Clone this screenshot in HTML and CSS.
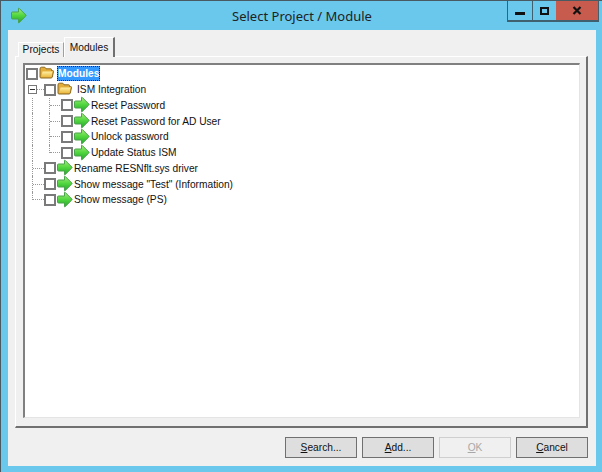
FILE: index.html
```html
<!DOCTYPE html>
<html lang="en">
<head>
<meta charset="utf-8">
<title>Select Project / Module</title>
<link rel="stylesheet" href="styles.css">
</head>
<body>
<svg class="defs" width="0" height="0" aria-hidden="true">
  <defs>
    <linearGradient id="arrow-fill" x1="0" y1="0" x2="0" y2="1">
      <stop offset="0" stop-color="#a5ee7c"/>
      <stop offset="0.5" stop-color="#52d63f"/>
      <stop offset="1" stop-color="#1fa52c"/>
    </linearGradient>
    <linearGradient id="folder-fill" x1="0" y1="0" x2="0" y2="1">
      <stop offset="0" stop-color="#fff0a8"/>
      <stop offset="1" stop-color="#ecb93f"/>
    </linearGradient>
  </defs>
  <symbol id="arrow" viewBox="0 0 17 17">
    <path d="M2.5 5H8.5V1.5Q8.5 .8 9.2 1.4L15.8 8Q16.3 8.5 15.8 9L9.2 15.6Q8.5 16.2 8.5 15.5V12H2.5Q1.5 12 1.5 11V6Q1.5 5 2.5 5Z" fill="url(#arrow-fill)" stroke="#4aa24a" stroke-width="1" stroke-linejoin="round"/>
  </symbol>
  <symbol id="folder" viewBox="0 0 15 13">
    <path d="M1 3V11Q1 12 2 12H12Q13 12 13.3 11L14.5 5.5Q14.6 4.5 13.5 4.5H12.5V3.5Q12.5 2.8 11.8 2.8H7L5.8 1.2H2.5Q1 1.2 1 3Z" fill="#e3ad3a" stroke="#8c6a22" stroke-width="1" stroke-linejoin="round"/>
    <path d="M3.5 5.5H13.5L12.4 11H2.2Z" fill="url(#folder-fill)"/>
  </symbol>
</svg>
<div class="window">
  <header class="titlebar">
    <svg class="app-icon"><use href="#arrow"/></svg>
    <div class="title">Select Project / Module</div>
    <div class="controls">
      <div class="ctl ctl-min"><span class="min-glyph"></span></div>
      <div class="ctl ctl-max"><span class="max-glyph"></span></div>
      <div class="ctl ctl-close">
        <svg width="10" height="9" viewBox="0 0 10 9"><path d="M1.5 1L8.5 8M8.5 1L1.5 8" stroke="#111" stroke-width="2.2"/></svg>
      </div>
    </div>
  </header>
  <main class="client">
    <div class="tabs">
      <div class="tab">Projects</div>
      <div class="tab tab-active">Modules</div>
    </div>
    <section class="pane">
      <div class="tree">
        <div class="row row-root">
          <span class="check"></span>
          <svg class="folder"><use href="#folder"/></svg>
          <span class="root-label">Modules</span>
        </div>
        <div class="row row-group">
          <span class="expander"></span>
          <span class="dash dash-group"></span>
          <span class="check"></span>
          <svg class="folder"><use href="#folder"/></svg>
          <span class="label label-group">ISM Integration</span>
        </div>
        <div class="row row-child">
          <span class="guide"></span><span class="guide-inner"></span><span class="dash"></span>
          <span class="check"></span>
          <svg class="arrow"><use href="#arrow"/></svg>
          <span class="label">Reset Password</span>
        </div>
        <div class="row row-child">
          <span class="guide"></span><span class="guide-inner"></span><span class="dash"></span>
          <span class="check"></span>
          <svg class="arrow"><use href="#arrow"/></svg>
          <span class="label">Reset Password for AD User</span>
        </div>
        <div class="row row-child">
          <span class="guide"></span><span class="guide-inner"></span><span class="dash"></span>
          <span class="check"></span>
          <svg class="arrow"><use href="#arrow"/></svg>
          <span class="label">Unlock password</span>
        </div>
        <div class="row row-child">
          <span class="guide"></span><span class="guide-inner guide-end"></span><span class="dash"></span>
          <span class="check"></span>
          <svg class="arrow"><use href="#arrow"/></svg>
          <span class="label">Update Status ISM</span>
        </div>
        <div class="row row-top">
          <span class="guide"></span><span class="dash dash-top"></span>
          <span class="check"></span>
          <svg class="arrow"><use href="#arrow"/></svg>
          <span class="label">Rename RESNflt.sys driver</span>
        </div>
        <div class="row row-top">
          <span class="guide"></span><span class="dash dash-top"></span>
          <span class="check"></span>
          <svg class="arrow"><use href="#arrow"/></svg>
          <span class="label">Show message "Test" (Information)</span>
        </div>
        <div class="row row-top">
          <span class="guide guide-end"></span><span class="dash dash-top"></span>
          <span class="check"></span>
          <svg class="arrow"><use href="#arrow"/></svg>
          <span class="label">Show message (PS)</span>
        </div>
      </div>
    </section>
    <footer class="actions">
      <button class="btn" type="button"><u>S</u>earch...</button>
      <button class="btn" type="button"><u>A</u>dd...</button>
      <button class="btn btn-disabled" type="button" disabled><u>O</u>K</button>
      <button class="btn" type="button"><u>C</u>ancel</button>
    </footer>
  </main>
</div>
</body>
</html>
```
FILE: styles.css
```css
* { box-sizing: border-box; }
html, body { margin: 0; padding: 0; }
body { width: 602px; height: 472px; overflow: hidden; background: #69c8ec; font-family: "Liberation Sans", Arial, sans-serif; }
.defs { display: block; position: absolute; width: 0; height: 0; }
.window { width: 602px; height: 472px; display: flex; flex-direction: column; background: #69c8ec; border: 1px solid #4a5a63; border-bottom: 0; border-right: 0; padding: 0 6px 6px 7px; }

.titlebar { height: 29px; flex: none; display: flex; align-items: flex-start; position: relative; }
.app-icon { width: 17px; height: 17px; margin: 6px 0 0 2px; flex: none; }
.title { position: absolute; left: 0; right: 0; top: 6px; text-align: center; font-family: "Noto Sans", "Open Sans", sans-serif; font-size: 13px; line-height: 18px; color: #222; }
.controls { margin-left: auto; margin-right: -3px; display: flex; height: 21px; border: 1px solid #41606f; border-top: 0; border-width: 0 1px 2px 1px; }
.ctl { display: flex; align-items: center; justify-content: center; background: #69c8ec; }
.ctl-min { width: 25px; border-right: 1px solid #41606f; }
.ctl-max { width: 23px; }
.ctl-close { width: 42px; background: #c75c4e; }
.min-glyph { width: 10px; height: 3px; background: #111; margin-top: 5px; }
.max-glyph { width: 9px; height: 8px; border: 2px solid #111; background: #69c8ec; }

.client { flex: 1; display: flex; flex-direction: column; background: #f0f0f0; padding: 8px 8px 8px 7px; min-height: 0; font-size: 10.2px; color: #111; }
.tabs { height: 19px; flex: none; display: flex; align-items: flex-end; padding-left: 3px; position: relative; z-index: 1; margin-bottom: -1px; }
.tab { height: 15px; width: 46px; background: #f0f0f0; border: 1px solid #fff; border-bottom: 0; border-right: 1px solid #a0a0a0; display: flex; align-items: center; justify-content: center; line-height: 14px; }
.tab-active { height: 20px; width: 51px; border-right: 2px solid #707070; background: #f0f0f0; }

.pane { flex: 1; min-height: 0; background: #f0f0f0; border: 1px solid #fff; border-right: 2px solid #707070; border-bottom: 2px solid #707070; padding: 6px 6px 8px 7px; }
.tree { height: 100%; background: #fff; border-top: 2px solid #808080; border-left: 2px solid #808080; border-right: 1px solid #e4e4e4; border-bottom: 1px solid #e4e4e4; padding: 1px 0 0 1px; }

.row { height: 15.75px; display: flex; align-items: center; position: relative; }
.check { width: 12px; height: 12px; border: 2px solid #7a7a7a; background: #fff; flex: none; }
.folder { width: 15px; height: 13px; flex: none; margin-left: 1px; margin-top: -3px; }
.arrow { width: 17px; height: 17px; flex: none; margin-top: -1px; }
.label { margin-left: 1px; white-space: nowrap; }
.label-group { margin-left: 5px; }
.root-label { margin-left: 3px; padding: 0 1px; background: #3399ff; color: #fff; font-weight: 700; outline: 1px dotted #222; outline-offset: -1px; line-height: 15px; }

.row-group .expander { width: 9px; height: 9px; border: 1px solid #777; background: linear-gradient(#333, #333) center / 5px 1px no-repeat; margin-left: 2px; flex: none; }
.dash { height: 0; border-top: 1px dotted #999; flex: none; width: 10px; margin-right: 1px; }
.dash-group { width: 7px; margin-right: 0; }
.dash-top { width: 11px; margin-right: 0; }
.guide { width: 1px; height: 100%; border-left: 1px dotted #999; margin-left: 6px; flex: none; }
.guide-end { height: 50%; align-self: flex-start; }
.guide-inner { width: 1px; height: 100%; border-left: 1px dotted #999; margin-left: 16px; flex: none; }
.guide-inner.guide-end { height: 50%; align-self: flex-start; }

.actions { flex: none; display: flex; justify-content: flex-end; gap: 5px; padding-top: 9px; height: 30px; }
.btn { width: 72px; height: 21px; padding: 0; background: #dedede; border: 1px solid #707070; font: inherit; font-size: 10.2px; color: #111; }
.btn-disabled { background: #f0f0f0; border-color: #cfcfcf; color: #a8a8a8; }
```
